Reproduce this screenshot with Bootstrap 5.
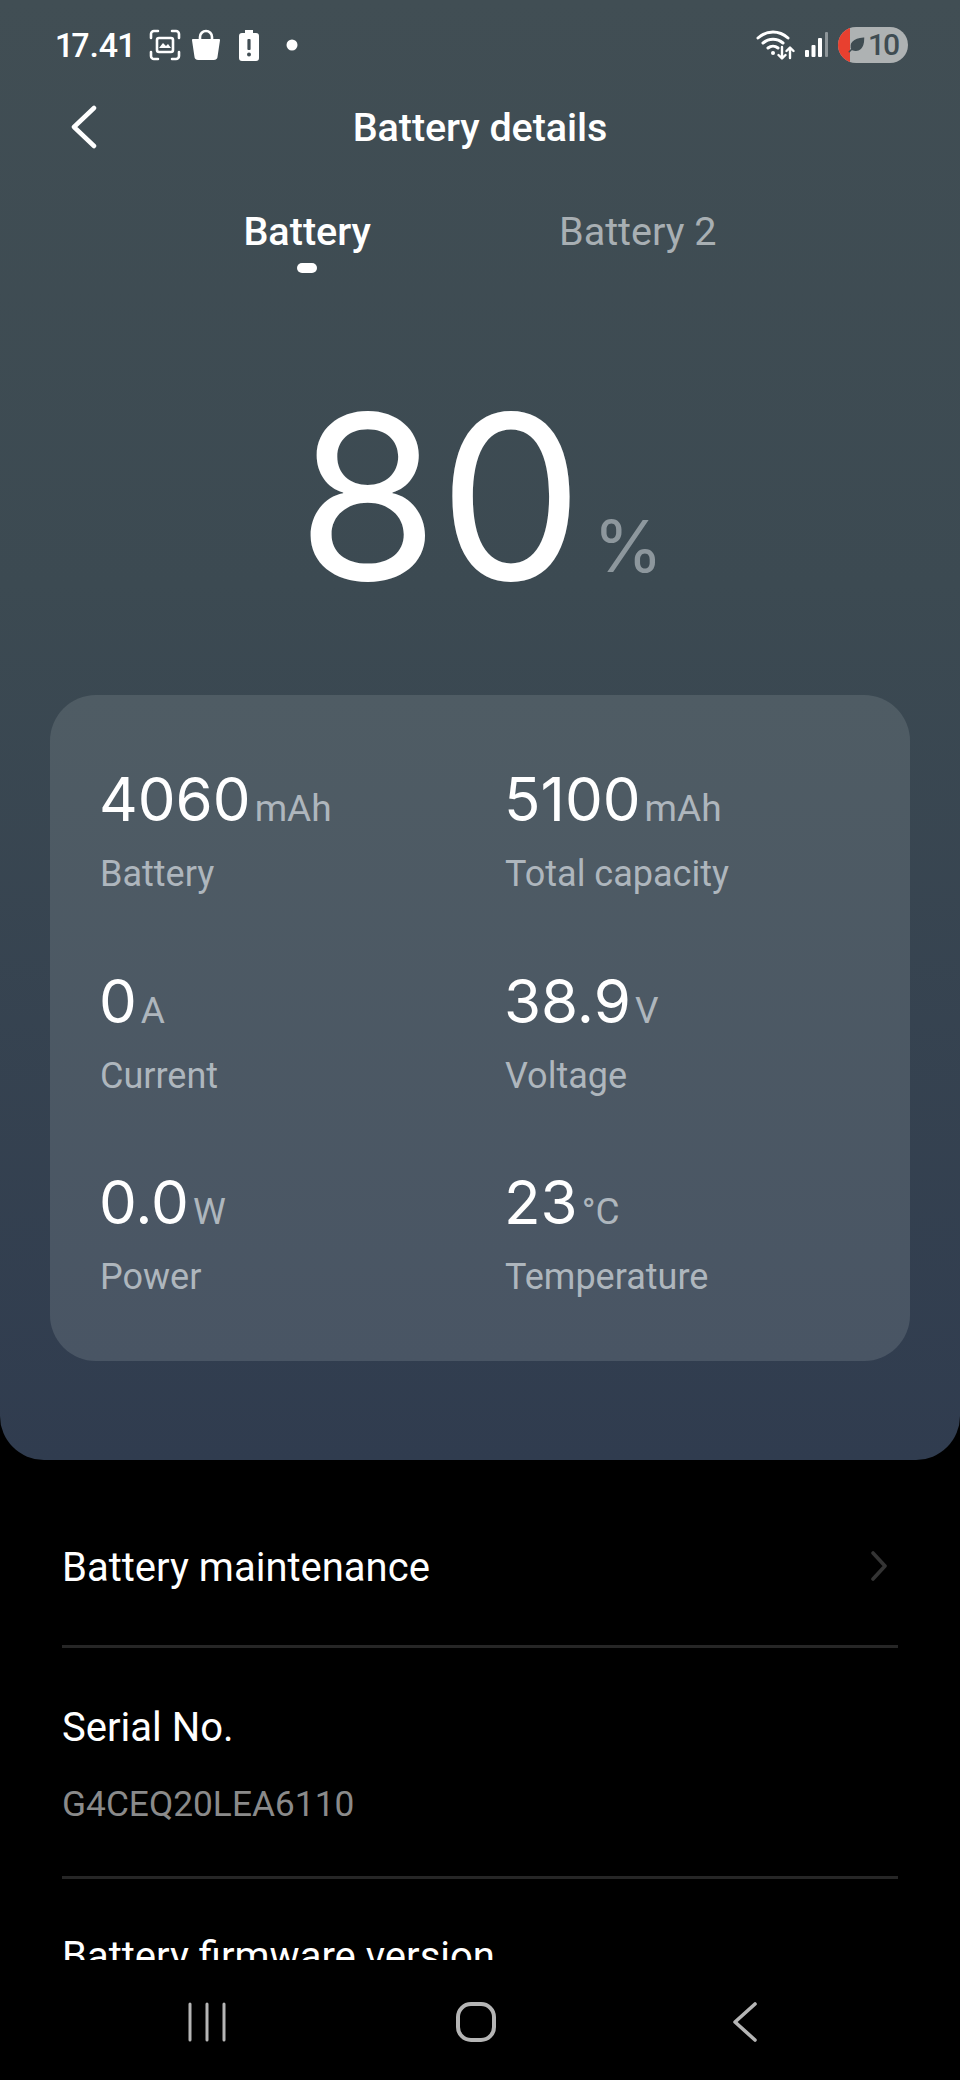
<!DOCTYPE html>
<html lang="en">
<head>
<meta charset="utf-8">
<title>Battery details</title>
<link rel="stylesheet" href="https://cdn.jsdelivr.net/npm/bootstrap@5.3.0/dist/css/bootstrap.min.css">
<style>
html,body{background:#000;margin:0}
body{font-family:Roboto,"Noto Sans",sans-serif;color:#fff;width:960px;height:2080px;overflow:hidden;font-variant-numeric:proportional-nums}
.shell{height:2080px}
.hero{height:1460px;background:linear-gradient(180deg,#414e54 0%,#3c4a52 40%,#303c4f 100%);border-radius:0 0 44px 44px;padding:0 50px}
.statusrow{height:90px;padding:0 2px 0 6px}
.clock{font-size:34px;font-weight:500;line-height:1}
.icn-scan{margin-left:15px}
.icn-bag{margin-left:10px}
.icn-batt{margin-left:18px}
.icn-dot{margin-left:27px}
.icn-gap{margin-left:10px}
.pillbat{width:70px;height:36px;border-radius:18px;background:#aeb2b3;overflow:hidden;color:#3f4c52;font-size:30px;font-weight:500;line-height:36px}
.pillred{width:12px;background:#e8402f;height:100%;flex:none}
.pillleaf{margin-left:-3px;flex:none}
.pillnum{margin-left:4px}
.titlerow{height:74px;margin:0 -50px;padding:0 0 0 69px}
.backbox{width:30px}
.pagetitle{font-size:39.6px;font-weight:500;line-height:1;margin:2px 0 0;letter-spacing:-.1px}
.titletext{left:0;right:0;top:50%;transform:translateY(-50%);text-align:center}
.tabsrow{margin-top:44px;gap:188px;height:65px}
.tabitem{font-size:39.6px;line-height:1;color:#a8afb3;font-weight:400;position:relative;padding-top:4px}
.tabitem.on{color:#fff;font-weight:500}
.tabdot{width:20px;height:10px;border-radius:5px;background:#fff;margin:11px auto 0}
.bigwrap{height:422px;padding-bottom:84px}
.bignum{font-family:Inter,Roboto,sans-serif;font-size:229px;line-height:1;font-weight:400}
.bigunit{font-family:Inter,Roboto,sans-serif;font-size:71px;line-height:1;color:#8d979d;font-weight:400;margin-left:10px;margin-bottom:29px}
.statcard{background:linear-gradient(180deg,#4f5c64 0%,#495564 100%);border-radius:46px;height:666px;padding:71px 0 0 50px;border:0}
.statgrid{display:grid;grid-template-columns:405px 1fr}
.statcell{height:201.5px}
.valline{line-height:66px;height:66px;white-space:nowrap}
.valnum{font-family:Inter,Roboto,sans-serif;font-size:60px;font-weight:400;margin-left:-1px}
.valunit{font-size:37px;color:#aeb6bd;margin-left:4px}
.vallabel{font-size:36px;color:#aeb6bd;line-height:40px;margin-top:22px}
.listwrap{height:500px;overflow:hidden;padding:0 62px}
.rowtop{height:188px;border-bottom:3px solid #262626;padding-top:30px}
.rowmain{font-size:40px;line-height:1;color:#fff}
.rowsub{font-size:35.3px;line-height:1;color:#8a8a8a;margin-top:39px;font-variant-numeric:tabular-nums}
.rowserial{height:231px;border-bottom:3px solid #262626;padding-top:60px}
.rowfirm{padding-top:58px}
.chev{margin:0 10px 3px 0}
.navrow{height:120px;background:#000;padding:42px 8px 0 0}
.navslot{width:269px}
</style>
</head>
<body>
<div class="shell d-flex flex-column">
  <section class="hero">
    <div class="statusrow d-flex align-items-center justify-content-between">
      <div class="d-flex align-items-center">
        <span class="clock">17.41</span>
        <svg class="icn-scan" width="32" height="32" viewBox="0 0 32 32" fill="none" stroke="#fff" stroke-width="2.6" stroke-linecap="round"><path d="M2 9V5a3 3 0 0 1 3-3h4M23 2h4a3 3 0 0 1 3 3v4M30 23v4a3 3 0 0 1-3 3h-4M9 30H5a3 3 0 0 1-3-3v-4"/><rect x="8" y="9" width="16" height="14" rx="2"/><path d="M10 19l4-5 3 3 2-2 3 4z" fill="#fff" stroke="none"/></svg>
        <svg class="icn-bag" width="30" height="32" viewBox="0 0 30 32"><path d="M9 11V8a6 6 0 0 1 12 0v3" fill="none" stroke="#fff" stroke-width="2.6"/><path d="M2 10h26a1 1 0 0 1 1 1.2l-2.4 16A4 4 0 0 1 22.7 31H7.3a4 4 0 0 1-3.9-3.8L1 11.2A1 1 0 0 1 2 10z" fill="#fff"/></svg>
        <svg class="icn-batt" width="20" height="32" viewBox="0 0 20 32"><path d="M6 1h8v3h3a3 3 0 0 1 3 3v22a3 3 0 0 1-3 3H3a3 3 0 0 1-3-3V7a3 3 0 0 1 3-3h3z" fill="#fff"/><rect x="8.4" y="10" width="3.2" height="11" rx="1" fill="#414e54"/><circle cx="10" cy="25.5" r="2" fill="#414e54"/></svg>
        <svg class="icn-dot" width="12" height="12" viewBox="0 0 12 12"><circle cx="6" cy="6" r="5.5" fill="#fff"/></svg>
      </div>
      <div class="d-flex align-items-center">
        <svg width="39" height="32" viewBox="0 0 39 32" fill="none" stroke="#fff" stroke-linecap="round" stroke-linejoin="round"><path d="M2 9c9-8 21-8 30 0M7 14c6-5 14-5 20 0M12 19c3-2.500 7-2.500 10 0" stroke-width="3"/><circle cx="17" cy="24" r="2" fill="#fff" stroke="none"/><path d="M26 18v11M22.500 26l3.500 3.500 3.500-3.500M34 29V19M30.500 22l3.500-3.500 3.500 3.500" stroke-width="2.4"/></svg>
        <svg class="icn-gap" width="23" height="26" viewBox="0 0 23 26"><rect x="0" y="18" width="4" height="7" rx="1" fill="#fff"/><rect x="6.500" y="13" width="4" height="12" rx="1" fill="#fff"/><rect x="13" y="6" width="4" height="19" rx="1" fill="#fff"/><rect x="20" y="0" width="3" height="25" rx="1" fill="#8d9599"/></svg>
        <div class="pillbat d-flex icn-gap">
          <div class="pillred"></div>
          <svg class="pillleaf align-self-center" width="18" height="22" viewBox="0 0 24 24"><path d="M3 21L9 15M7 18C3 10 9 4 22 3c0 13-6 18-15 15z" fill="#3f4c52" stroke="#3f4c52" stroke-width="2" stroke-linecap="round"/></svg>
          <span class="pillnum">10</span>
        </div>
      </div>
    </div>
    <div class="titlerow d-flex align-items-center position-relative">
      <div class="backbox">
        <svg width="30" height="44" viewBox="0 0 30 44" fill="none" stroke="#fff" stroke-width="4.5" stroke-linecap="round" stroke-linejoin="round"><path d="M25 3L5 22l20 19"/></svg>
      </div>
      <div class="titletext position-absolute"><h1 class="pagetitle">Battery details</h1></div>
    </div>
    <div class="tabsrow d-flex justify-content-center">
      <div class="tabitem on">Battery<div class="tabdot"></div></div>
      <div class="tabitem">Battery 2</div>
    </div>
    <div class="bigwrap d-flex justify-content-center align-items-end">
      <span class="bignum">80</span>
      <span class="bigunit">%</span>
    </div>
    <div class="card statcard">
      <div class="statgrid">
        <div class="statcell"><div class="valline"><span class="valnum">4060</span><span class="valunit">mAh</span></div><div class="vallabel">Battery</div></div>
        <div class="statcell"><div class="valline"><span class="valnum">5100</span><span class="valunit">mAh</span></div><div class="vallabel">Total capacity</div></div>
        <div class="statcell"><div class="valline"><span class="valnum">0</span><span class="valunit">A</span></div><div class="vallabel">Current</div></div>
        <div class="statcell"><div class="valline"><span class="valnum">38.9</span><span class="valunit">V</span></div><div class="vallabel">Voltage</div></div>
        <div class="statcell"><div class="valline"><span class="valnum">0.0</span><span class="valunit">W</span></div><div class="vallabel">Power</div></div>
        <div class="statcell"><div class="valline"><span class="valnum">23</span><span class="valunit">°C</span></div><div class="vallabel">Temperature</div></div>
      </div>
    </div>
  </section>
  <section class="listwrap">
    <div class="rowtop d-flex align-items-center justify-content-between">
      <span class="rowmain">Battery maintenance</span>
      <svg class="chev" width="18" height="30" viewBox="0 0 18 30" fill="none" stroke="#343434" stroke-width="3.6" stroke-linecap="round" stroke-linejoin="round"><path d="M3 2l12 13L3 28"/></svg>
    </div>
    <div class="rowserial">
      <div class="rowmain">Serial No.</div>
      <div class="rowsub">G4CEQ20LEA6110</div>
    </div>
    <div class="rowfirm"><div class="rowmain">Battery firmware version</div></div>
  </section>
  <nav class="navrow d-flex justify-content-center">
    <div class="navslot d-flex justify-content-center">
      <svg width="38" height="40" viewBox="0 0 38 40" fill="none" stroke="#b5b5b5" stroke-width="3" stroke-linecap="round"><path d="M2 2v36M19 2v36M36 2v36"/></svg>
    </div>
    <div class="navslot d-flex justify-content-center">
      <svg width="40" height="40" viewBox="0 0 40 40" fill="none" stroke="#b5b5b5" stroke-width="4"><rect x="2" y="2" width="36" height="36" rx="13"/></svg>
    </div>
    <div class="navslot d-flex justify-content-center">
      <svg width="26" height="40" viewBox="0 0 26 40" fill="none" stroke="#b5b5b5" stroke-width="3.6" stroke-linecap="round" stroke-linejoin="round"><path d="M23 2L3 20l20 18"/></svg>
    </div>
  </nav>
</div>
<script src="https://cdn.jsdelivr.net/npm/bootstrap@5.3.0/dist/js/bootstrap.bundle.min.js"></script>
</body>
</html>
